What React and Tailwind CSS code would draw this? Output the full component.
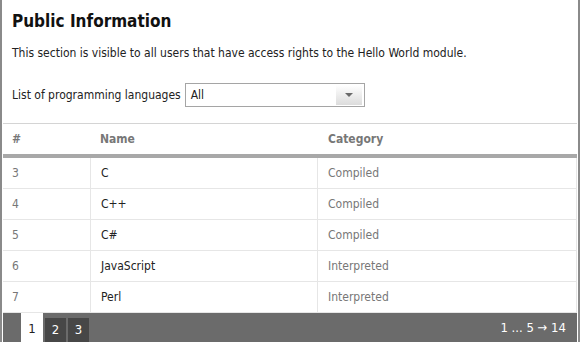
const rows = [
  { id: 3, name: "C", category: "Compiled" },
  { id: 4, name: "C++", category: "Compiled" },
  { id: 5, name: "C#", category: "Compiled" },
  { id: 6, name: "JavaScript", category: "Interpreted" },
  { id: 7, name: "Perl", category: "Interpreted" },
];

export default function App() {
  return (
    <div
      className="w-[580px] h-[342px] overflow-hidden bg-white text-[12px] text-[#222]"
      style={{ fontFamily: '"DejaVu Sans Condensed", "DejaVu Sans", sans-serif' }}
    >
      <div className="h-full border-l-2 border-r-2 border-[#8a8a8a] pl-[1px] pr-[1px] flex flex-col">

        <div className="px-[9px]">
          <h1 className="text-[17px] font-bold leading-none pt-[13px] text-[#111]">
            Public Information
          </h1>
          <p className="mt-[17px] leading-none">
            This section is visible to all users that have access rights to the Hello World module.
          </p>
          <div className="mt-[24px] flex items-center gap-[4px]">
            <span>List of programming languages</span>
            <div className="w-[180px] h-[24px] border border-[#a5a5a5] flex items-center">
              <span className="flex-1 pl-[5px]">All</span>
              <div className="w-[26px] h-[20px] mr-[2px] bg-gradient-to-b from-white to-[#dcdcdc] flex items-center justify-center">
                <svg width="8" height="4" viewBox="0 0 8 4">
                  <path d="M0 0 L8 0 L4 4 Z" fill="#6a6a6a" />
                </svg>
              </div>
            </div>
          </div>
        </div>

        <div className="mt-[16px] border-t border-[#d4d4d4]">
          <div className="h-[30px] flex items-center font-bold text-[#777]">
            <div className="w-[87px] pl-[9px]">#</div>
            <div className="w-[227px] pl-[10px]">Name</div>
            <div className="flex-1 pl-[11px]">Category</div>
          </div>
          <div className="h-[4px] bg-[#a8a8a8]" />

          {rows.map(row => (
            <div
              key={row.id}
              className="h-[31px] flex border-b border-r border-[#e6e6e6]"
            >
              <div className="w-[87px] pl-[9px] flex items-center text-[#777]">
                {row.id}
              </div>
              <div className="w-[227px] pl-[10px] flex items-center border-l border-[#e6e6e6]">
                {row.name}
              </div>
              <div className="flex-1 pl-[10px] flex items-center border-l border-[#e6e6e6] text-[#777]">
                {row.category}
              </div>
            </div>
          ))}
        </div>

        <div className="flex-1 bg-[#6b6b6b] flex items-end justify-between pl-[18px] pr-[11px] text-[13px]">
          <div className="flex gap-[2px] items-end h-full">
            <div className="w-[22px] h-full bg-white text-[#222] flex items-center justify-center pt-[3px]">1</div>
            <div className="w-[21px] h-[24px] bg-[#474747] text-white flex items-center justify-center">2</div>
            <div className="w-[21px] h-[24px] bg-[#474747] text-white flex items-center justify-center">3</div>
          </div>
          <div className="self-center text-white">1 ... 5 → 14</div>
        </div>

      </div>
    </div>
  );
}
